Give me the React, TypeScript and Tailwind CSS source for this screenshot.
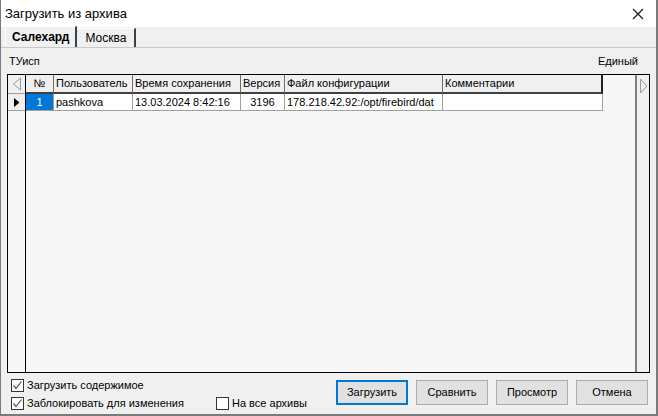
import React from "react";

const F = { fontFamily: '"Liberation Sans", Arial, sans-serif' };

function Check({ checked }: { checked: boolean }) {
  return (
    <span className="w-[13px] h-[13px] border border-[#333] bg-white flex items-center justify-center shrink-0">
      {checked && (
        <svg width="11" height="11" viewBox="0 0 11 11">
          <path d="M1.5 5.5 L4 8.5 L9.5 1.5" fill="none" stroke="#555" strokeWidth="1.2" />
        </svg>
      )}
    </span>
  );
}

const cols = [
  { t: "№", w: 28, center: true },
  { t: "Пользователь", w: 79 },
  { t: "Время сохранения", w: 108 },
  { t: "Версия", w: 44 },
  { t: "Файл конфигурации", w: 158 },
  { t: "Комментарии", w: 160 },
];

const row = ["1", "pashkova", "13.03.2024 8:42:16", "3196", "178.218.42.92:/opt/firebird/dat", ""];

export default function App() {
  return (
    <div
      style={F}
      className="w-[658px] h-[416px] flex flex-col bg-[#f0f0f0] border-l border-r-2 border-b-2 border-[#7a7a7a] text-[11px] text-black overflow-hidden"
    >
      {/* title */}
      <div className="h-[27px] bg-white flex items-center justify-between pl-[4px] pr-[12px] shrink-0">
        <span className="text-[13px]">Загрузить из архива</span>
        <svg width="12" height="12" viewBox="0 0 12 12">
          <path d="M1 1 L11 11 M11 1 L1 11" stroke="#111" strokeWidth="1.1" />
        </svg>
      </div>
      {/* tabs */}
      <div className="h-[21px] flex items-end pl-[4px] border-b border-[#c8c8c8] shrink-0 text-[12px]">
        <div className="h-[21px] px-[6px] flex items-center font-bold bg-[#f0f0f0] border-l border-t border-white border-r-2 border-r-[#404040]">
          Салехард
        </div>
        <div className="h-[19px] px-[8px] flex items-center bg-[#f0f0f0] border-t border-white border-r-2 border-r-[#404040]">
          Москва
        </div>
      </div>
      {/* labels */}
      <div className="h-[26px] flex items-center justify-between pl-[8px] pr-[18px] shrink-0">
        <span>ТУисп</span>
        <span>Единый</span>
      </div>
      {/* grid */}
      <div className="mx-[6px] h-[299px] border border-black flex shrink-0">
        <div className="flex-1 flex bg-[#f7f7f7]">
          {/* indicator column */}
          <div className="w-[18px] border-r border-black flex flex-col">
            <div className="h-[19px] flex items-center justify-center bg-[#f0f0f0] border-b border-[#a0a0a0]">
              <svg width="10" height="14" viewBox="0 0 10 14">
                <path d="M8.5 1 L1.5 7 L8.5 13 Z" fill="none" stroke="#9a9a9a" strokeWidth="1" />
              </svg>
            </div>
            <div className="h-[17px] flex items-center justify-center bg-[#f0f0f0] border-b border-[#a0a0a0]">
              <svg width="6" height="9" viewBox="0 0 6 9">
                <path d="M0 0 L5.5 4.5 L0 9 Z" fill="#000" />
              </svg>
            </div>
          </div>
          <div className="flex flex-col">
            <div className="flex h-[19px]">
              {cols.map((c, i) => (
                <div
                  key={i}
                  style={{ width: c.w }}
                  className={`h-[19px] flex items-center px-[2px] whitespace-nowrap overflow-hidden bg-[#f0f0f0] border-r border-r-[#6e6e6e] border-b-2 border-b-[#404040] ${
                    c.center ? "justify-center" : ""
                  } ${i === cols.length - 1 ? "border-r-2 border-r-[#202020]" : ""}`}
                >
                  {c.t}
                </div>
              ))}
            </div>
            <div className="flex h-[17px]">
              {row.map((v, i) => (
                <div
                  key={i}
                  style={{ width: cols[i].w }}
                  className={`h-[17px] flex items-center px-[2px] border-r border-b border-[#a0a0a0] whitespace-nowrap overflow-hidden ${
                    i === 0 ? "justify-center bg-[#0078d7] text-white" : "bg-white"
                  } ${i === 3 ? "justify-center" : ""}`}
                >
                  {v}
                </div>
              ))}
            </div>
          </div>
        </div>
        {/* scrollbar column */}
        <div className="w-[14px] border-l-2 border-l-[#808080] bg-[#f0f0f0] flex justify-center pt-[3px]">
          <svg width="9" height="16" viewBox="0 0 9 16">
            <path d="M1.5 1 L8 8 L1.5 15 Z" fill="none" stroke="#9a9a9a" strokeWidth="1" />
          </svg>
        </div>
      </div>
      {/* bottom */}
      <div className="flex-1 flex items-start">
        <div className="flex flex-col pl-[10px] pt-[6px] gap-[5px]">
          <label className="flex items-center gap-[3px] h-[13px] whitespace-nowrap">
            <Check checked />
            <span>Загрузить содержимое</span>
          </label>
          <div className="flex items-center h-[13px] whitespace-nowrap">
            <label className="flex items-center gap-[3px] w-[205px]">
              <Check checked />
              <span>Заблокировать для изменения</span>
            </label>
            <label className="flex items-center gap-[3px]">
              <Check checked={false} />
              <span>На все архивы</span>
            </label>
          </div>
        </div>
        <div className="ml-auto flex gap-[8px] pt-[7px] pr-[8px]">
          <button className="w-[72px] h-[25px] border-2 border-[#0078d7] bg-[#e1e1e1] flex items-center justify-center">
            Загрузить
          </button>
          {["Сравнить", "Просмотр", "Отмена"].map((b) => (
            <button
              key={b}
              className="w-[72px] h-[25px] border border-[#adadad] bg-[#e1e1e1] flex items-center justify-center"
            >
              {b}
            </button>
          ))}
        </div>
      </div>
    </div>
  );
}
